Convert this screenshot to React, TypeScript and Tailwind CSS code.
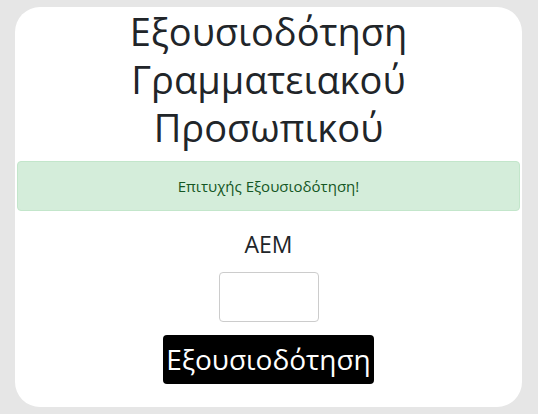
export default function App() {
  return (
    <div
      className="min-h-[414px] bg-[#e6e6e6] pt-[7px] pl-[15px] pr-[16px] pb-[7px]"
      style={{ fontFamily: '"Open Sans", "Noto Sans", sans-serif' }}
    >
      <div className="flex h-[400px] w-[507px] flex-col items-center rounded-[25px] bg-white px-[2px]">
        <h1 className="text-center text-[38px] leading-[48px] text-[#212529]">
          Εξουσιοδότηση
          <br />
          Γραμματειακού
          <br />
          Προσωπικού
        </h1>
        <div className="mt-[10px] flex h-[50px] w-full items-center justify-center rounded-[4px] border border-[#c3e6cb] bg-[#d4edda] text-[15px] text-[#155724]">
          Επιτυχής Εξουσιοδότηση!
        </div>
        <label className="mt-[18px] text-[23px] leading-[30px] text-[#212529]">AEM</label>
        <input
          type="text"
          className="mt-[13px] h-[50px] w-[100px] rounded-[4px] border border-[#cccccc] bg-white outline-none"
        />
        <button className="mt-[13px] h-[49px] rounded-[4px] bg-black px-[3px] text-[28px] leading-[49px] text-white">
          Εξουσιοδότηση
        </button>
      </div>
    </div>
  );
}
